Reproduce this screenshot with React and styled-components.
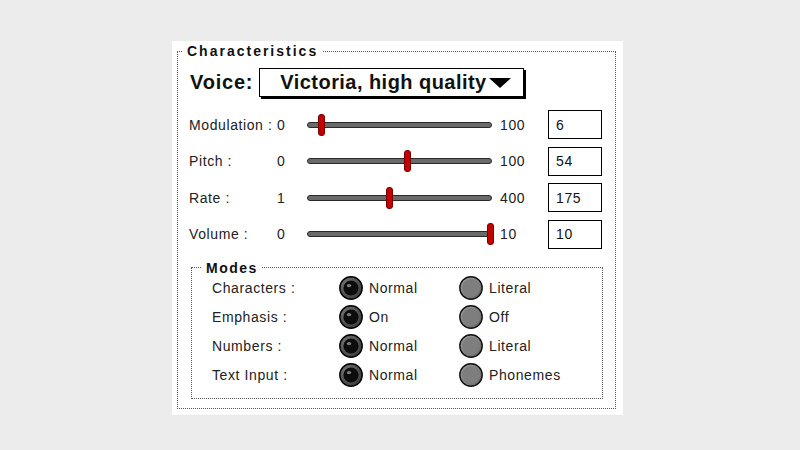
import React, { useId } from "react";
import styled, { createGlobalStyle } from "styled-components";

const Global = createGlobalStyle`
  html, body { margin: 0; padding: 0; background: #ececec; }
  body { font-family: "Liberation Sans", Arial, sans-serif; color: #1c1c1c; }
`;

const Panel = styled.div`
  width: 451px;
  height: 374px;
  box-sizing: border-box;
  margin: 41px 0 0 172px;
  background: #fff;
  padding: 3px 7px 0 5px;
`;

const Frame = styled.fieldset`
  margin: ${(p) => p.$margin || "0"};
  padding: 0 0 ${(p) => p.$bottom || 0}px 0;
  border: 1px dotted #555;
  min-width: 0;
`;

const Legend = styled.legend`
  margin-left: ${(p) => p.$indent}px;
  padding: 0 4px;
  font: bold 14px "Liberation Sans", Arial, sans-serif;
  letter-spacing: ${(p) => p.$spacing}px;
  line-height: 14px;
  color: #111;
`;

const Body = styled.div`
  padding: 10px 0 0 11px;
`;

const VoiceRow = styled.div`
  display: flex;
  align-items: center;
  gap: 6px;
  margin-left: 1px;
`;

const VoiceLabel = styled.span`
  font: bold 20px "Liberation Sans", Arial, sans-serif;
  letter-spacing: 0.8px;
  color: #111;
`;

const Popup = styled.div`
  width: 265px;
  height: 29px;
  box-sizing: border-box;
  border: 1px solid #000;
  box-shadow: 2px 2px 0 #000;
  display: flex;
  align-items: center;
  padding-left: 20px;
  font: bold 20px "Liberation Sans", Arial, sans-serif;
  letter-spacing: 0.45px;
  color: #111;
  background: #fff;
`;

const Arrow = styled.svg`
  margin-left: 2px;
  flex: none;
`;

const Sliders = styled.div`
  margin-top: 13px;
  display: flex;
  flex-direction: column;
  gap: 7.5px;
`;

const SliderRow = styled.div`
  display: grid;
  grid-template-columns: 88px 30px 185px 56px 54px;
  align-items: center;
  height: 29px;
`;

const Text = styled.span`
  font-size: 14px;
  letter-spacing: 0.6px;
  color: #222;
  white-space: nowrap;
  padding-left: ${(p) => p.$pad || 0}px;
`;

const Track = styled.div`
  position: relative;
  height: 6px;
  box-sizing: border-box;
  border: 1.5px solid #2a2a2a;
  border-radius: 3px;
  background: #6a6a6a;
`;

const Thumb = styled.div`
  position: absolute;
  top: 50%;
  width: 7px;
  height: 22px;
  margin: -11px 0 0 -3.5px;
  box-sizing: border-box;
  background: #c40000;
  border: 1px solid #7a0000;
  border-radius: 3px;
`;

const ValueBox = styled.div`
  height: 29px;
  box-sizing: border-box;
  border: 1px solid #000;
  padding-left: 7px;
  display: flex;
  align-items: center;
  font-size: 14px;
  letter-spacing: 0.6px;
  color: #111;
`;

const Modes = styled.div`
  margin-top: -1px;
  padding: 0 0 0 20px;
`;

const ModeRow = styled.div`
  display: grid;
  grid-template-columns: 127px 120px 1fr;
  align-items: center;
  height: 29px;
`;

const Option = styled.label`
  display: flex;
  align-items: center;
  gap: 6px;
`;

function Radio({ checked }) {
  const id = useId().replace(/:/g, "");
  if (checked) {
    return (
      <svg width="24" height="24" viewBox="0 0 24 24">
        <defs>
          <radialGradient id={id} cx="35%" cy="35%" r="70%">
            <stop offset="0" stopColor="#7a7a7a" />
            <stop offset="1" stopColor="#3c3c3c" />
          </radialGradient>
        </defs>
        <circle cx="12" cy="12" r="11.2" fill={`url(#${id})`} stroke="#000" strokeWidth="1.4" />
        <circle cx="12" cy="12" r="7.6" fill="#0c0c0c" />
        <ellipse cx="10" cy="9.6" rx="2.2" ry="1.7" fill="#7c7c7c" />
      </svg>
    );
  }
  return (
    <svg width="24" height="24" viewBox="0 0 24 24">
      <defs>
        <linearGradient id={id} x1="0" y1="0" x2="1" y2="1">
          <stop offset="0" stopColor="#a0a0a0" />
          <stop offset="0.5" stopColor="#838383" />
          <stop offset="1" stopColor="#606060" />
        </linearGradient>
      </defs>
      <circle cx="12" cy="12" r="11.2" fill={`url(#${id})`} stroke="#111" strokeWidth="1.4" />
      <circle cx="12" cy="12" r="9" fill="#7e7e7e" />
    </svg>
  );
}

const sliders = [
  { label: "Modulation :", min: 0, max: 100, value: 6 },
  { label: "Pitch :", min: 0, max: 100, value: 54 },
  { label: "Rate :", min: 1, max: 400, value: 175 },
  { label: "Volume :", min: 0, max: 10, value: 10 },
];

const modes = [
  { label: "Characters :", a: "Normal", b: "Literal" },
  { label: "Emphasis :", a: "On", b: "Off" },
  { label: "Numbers :", a: "Normal", b: "Literal" },
  { label: "Text Input :", a: "Normal", b: "Phonemes" },
];

export default function App() {
  return (
    <>
      <Global />
      <Panel>
        <Frame $bottom={9}>
          <Legend $indent={5} $spacing={2}>Characteristics</Legend>
          <Body>
            <VoiceRow>
              <VoiceLabel>Voice:</VoiceLabel>
              <Popup>
                Victoria, high quality
                <Arrow width="22" height="10" viewBox="0 0 22 10">
                  <polygon points="0,0 22,0 11,10" fill="#000" />
                </Arrow>
              </Popup>
            </VoiceRow>
            <Sliders>
              {sliders.map((s) => {
                const frac = (s.value - s.min) / (s.max - s.min);
                return (
                  <SliderRow key={s.label}>
                    <Text>{s.label}</Text>
                    <Text>{s.min}</Text>
                    <Track>
                      <Thumb style={{ left: `${3 + frac * 179}px` }} />
                    </Track>
                    <Text $pad={8}>{s.max}</Text>
                    <ValueBox>{s.value}</ValueBox>
                  </SliderRow>
                );
              })}
            </Sliders>
            <Frame $margin="12px 12px 0 2px" $bottom={8}>
              <Legend $indent={10} $spacing={1.5}>Modes</Legend>
              <Modes>
                {modes.map((m) => (
                  <ModeRow key={m.label}>
                    <Text>{m.label}</Text>
                    <Option>
                      <Radio checked />
                      <Text>{m.a}</Text>
                    </Option>
                    <Option>
                      <Radio />
                      <Text>{m.b}</Text>
                    </Option>
                  </ModeRow>
                ))}
              </Modes>
            </Frame>
          </Body>
        </Frame>
      </Panel>
    </>
  );
}
